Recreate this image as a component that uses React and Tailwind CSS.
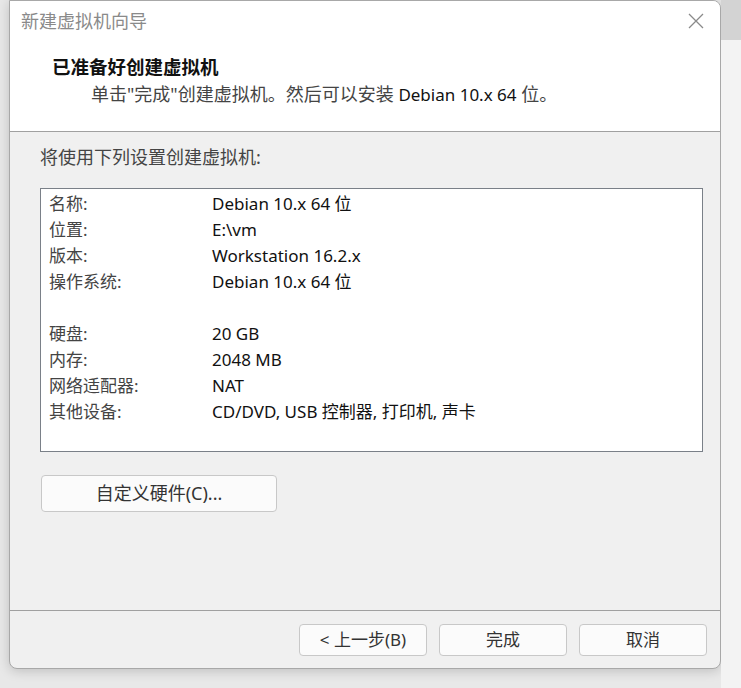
import React from 'react';

const rows = [
  ['名称:', 'Debian 10.x 64 位'],
  ['位置:', 'E:\\vm'],
  ['版本:', 'Workstation 16.2.x'],
  ['操作系统:', 'Debian 10.x 64 位'],
  null,
  ['硬盘:', '20 GB'],
  ['内存:', '2048 MB'],
  ['网络适配器:', 'NAT'],
  ['其他设备:', 'CD/DVD, USB 控制器, 打印机, 声卡'],
];

const font = { fontFamily: 'Tahoma, "Noto Sans", "Noto Sans CJK SC", sans-serif' };

const Btn = ({ children, className = '' }) => (
  <button className={`h-[32px] rounded-[4px] border border-[#c8c8c8] bg-[#fbfbfb] text-[17px] text-[#333] ${className}`}>
    {children}
  </button>
);

export default function App() {
  return (
    <div className="flex h-[688px] w-[741px] overflow-hidden bg-[#e8e8e8] text-[#1a1a1a]" style={font}>
      <div className="ml-[9px] flex h-[669px] w-[712px] shrink-0 flex-col overflow-hidden rounded-b-[8px] rounded-tr-[8px] border border-[#a8a8a8] bg-[#f0f0f0] shadow-[0_2px_12px_rgba(0,0,0,0.18)]">
        {/* header */}
        <div className="h-[131px] shrink-0 border-b border-[#a0a0a0] bg-white">
          <div className="flex h-[40px] items-center justify-between pl-[11px] pr-[16px]">
            <span className="text-[18px] text-[#8a8a8a]">新建虚拟机向导</span>
            <svg width="16" height="16" viewBox="0 0 16 16" className="text-[#8a8a8a]">
              <path d="M1 1 L15 15 M15 1 L1 15" stroke="currentColor" strokeWidth="1.3" fill="none" />
            </svg>
          </div>
          <div className="pl-[42px] pt-[13px] text-[18.5px] font-bold leading-[26px] text-[#111]">已准备好创建虚拟机</div>
          <div className="pl-[81px] pt-[1px] text-[18px] leading-[26px] text-[#444]">
            单击"完成"创建虚拟机。然后可以安装 <span className="text-[17px] text-[#111]">Debian 10.x 64</span> 位。
          </div>
        </div>

        {/* body */}
        <div className="flex flex-1 flex-col px-[30px]">
          <div className="pt-[12px] text-[18px] leading-[26px] text-[#444]">将使用下列设置创建虚拟机:</div>
          <div className="mt-[18px] h-[264px] w-[663px] border border-[#7a8088] bg-white pl-[8px] pt-[2px]">
            {rows.map((r, i) =>
              r ? (
                <div key={i} className="flex text-[17px] leading-[26px]">
                  <span className="w-[163px] shrink-0 text-[#444]">{r[0]}</span>
                  <span className="text-[#111]">{r[1]}</span>
                </div>
              ) : (
                <div key={i} className="h-[26px]" />
              )
            )}
          </div>
          <Btn className="mt-[23px] ml-[1px] h-[37px] w-[236px] text-[18px]">自定义硬件(C)...</Btn>
        </div>

        {/* footer */}
        <div className="flex h-[58px] shrink-0 items-start justify-end gap-[12px] border-t border-[#a0a0a0] pr-[13px] pt-[13px]">
          <Btn className="w-[128px]">&lt; 上一步(B)</Btn>
          <Btn className="w-[128px]">完成</Btn>
          <Btn className="w-[128px]">取消</Btn>
        </div>
      </div>
      <div className="flex flex-1 flex-col">
        <div className="h-[40px] bg-[#d3d3d3]" />
        <div className="flex-1 bg-[#f3f3f3]" />
      </div>
    </div>
  );
}
